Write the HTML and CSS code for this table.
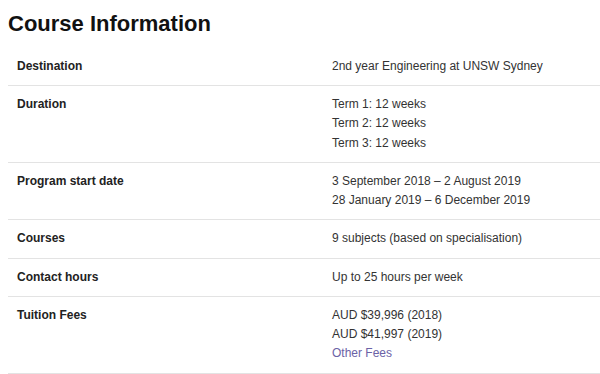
FILE: index.html
```html
<!DOCTYPE html>
<html lang="en">

<head>
    <meta charset="UTF-8">
    <meta name="viewport" content="width=device-width, initial-scale=1.0">
    <title>Course Information</title>
    <link rel="stylesheet" href="styles.css">
</head>

<body>

    <h2 class="title">Course Information</h2>

    <table class="course-table">
        <tr>
            <th>Destination</th>
            <td>2nd year Engineering at UNSW Sydney</td>
        </tr>
        <tr>
            <th>Duration</th>
            <td>Term 1: 12 weeks<br>Term 2: 12 weeks<br>Term 3: 12 weeks</td>
        </tr>
        <tr>
            <th>Program start date</th>
            <td>3 September 2018 &ndash; 2 August 2019<br>28 January 2019 &ndash; 6 December 2019</td>
        </tr>
        <tr>
            <th>Courses</th>
            <td>9 subjects (based on specialisation)</td>
        </tr>
        <tr>
            <th>Contact hours</th>
            <td>Up to 25 hours per week</td>
        </tr>
        <tr>
            <th>Tuition Fees</th>
            <td>AUD $39,996 (2018)<br>AUD $41,997 (2019)<br><a href="#" class="fees-link">Other Fees</a></td>
        </tr>
    </table>

</body>

</html>
```

FILE: styles.css
```css
body {
    font-family: 'Liberation Sans', Arial, sans-serif;
    margin: 0;
    padding: 0 0 0 8px;
    color: #333;
}

.title {
    font-size: 22px;
    font-weight: bold;
    color: #111;
    margin: 10px 0 9.75px 0;
    line-height: 28px;
}

.course-table {
    width: 100%;
    border-collapse: collapse;
    font-size: 12px;
    line-height: 19.25px;
}

.course-table tr {
    border-bottom: 1px solid #e3e3e3;
}

.course-table th {
    text-align: left;
    vertical-align: top;
    font-weight: bold;
    color: #222;
    width: 315px;
    padding: 9px 0 9px 9px;
}

.course-table td {
    vertical-align: top;
    padding: 9px 0;
}

.fees-link {
    color: #6b62a6;
    text-decoration: none;
}
```
